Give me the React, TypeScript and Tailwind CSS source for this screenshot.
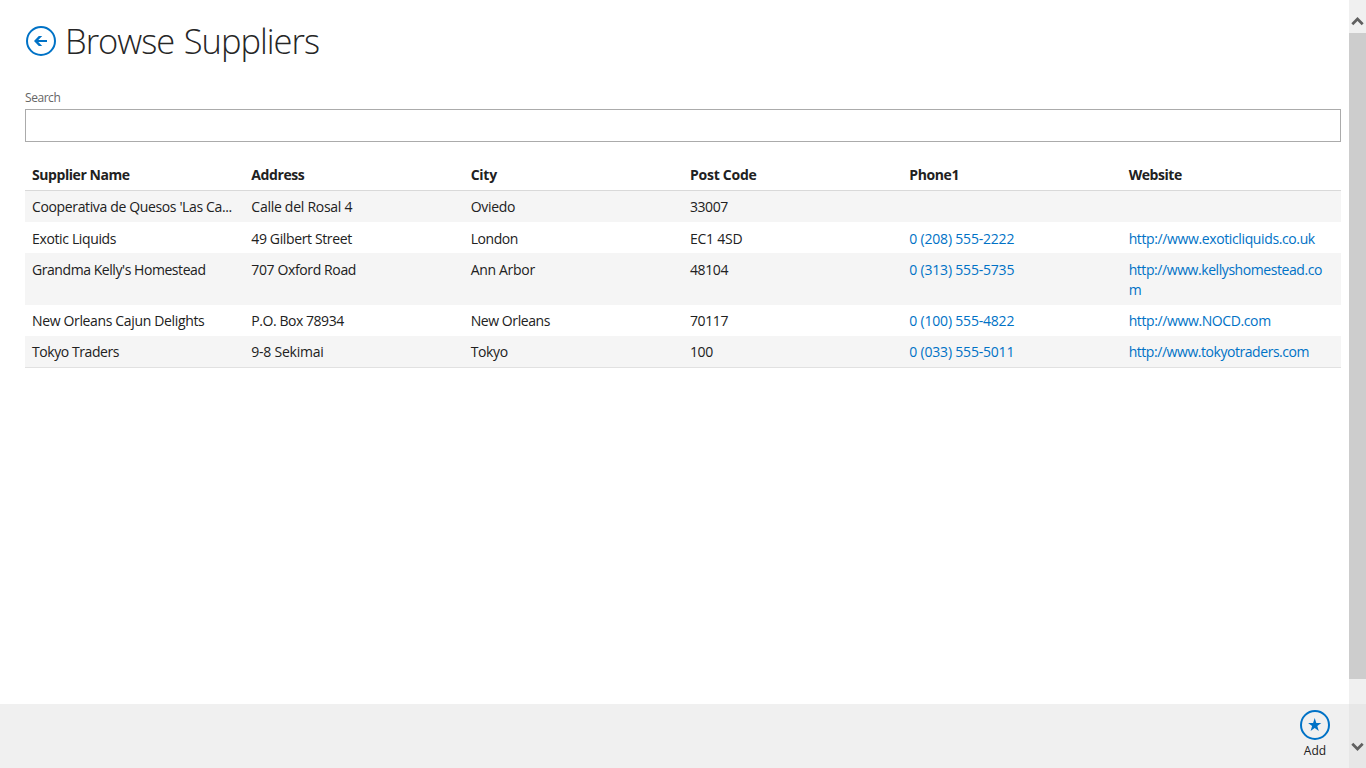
type Cell = { text: string; tracking: string };
type Row = { cells: Cell[]; height: string };

const c = (text: string, tracking: string): Cell => ({ text, tracking });

const headers: Cell[] = [
  c("Supplier Name", "tracking-[-0.43px]"),
  c("Address", "tracking-[-0.42px]"),
  c("City", "tracking-[-0.25px]"),
  c("Post Code", "tracking-[-0.25px]"),
  c("Phone1", "tracking-[-0.4px]"),
  c("Website", "tracking-[-0.45px]"),
];

const rows: Row[] = [
  {
    height: "h-[31px] pt-[6px]",
    cells: [
      c("Cooperativa de Quesos 'Las Ca...", "tracking-[-0.36px]"),
      c("Calle del Rosal 4", "tracking-[-0.27px]"),
      c("Oviedo", "tracking-[-0.28px]"),
      c("33007", "tracking-[-0.45px]"),
      c("", ""),
      c("", ""),
    ],
  },
  {
    height: "h-[31px] pt-[7px]",
    cells: [
      c("Exotic Liquids", "tracking-[-0.36px]"),
      c("49 Gilbert Street", "tracking-[-0.37px]"),
      c("London", "tracking-[-0.43px]"),
      c("EC1 4SD", "tracking-[-0.23px]"),
      c("0 (208) 555-2222", "tracking-[-0.2px]"),
      c("http://www.exoticliquids.co.uk", "tracking-[-0.38px]"),
    ],
  },
  {
    height: "h-[52px] pt-[7px]",
    cells: [
      c("Grandma Kelly's Homestead", "tracking-[-0.44px]"),
      c("707 Oxford Road", "tracking-[-0.38px]"),
      c("Ann Arbor", "tracking-[-0.31px]"),
      c("48104", "tracking-[-0.4px]"),
      c("0 (313) 555-5735", "tracking-[-0.2px]"),
      c("http://www.kellyshomestead.com", "tracking-[-0.43px]"),
    ],
  },
  {
    height: "h-[31px] pt-[6px]",
    cells: [
      c("New Orleans Cajun Delights", "tracking-[-0.35px]"),
      c("P.O. Box 78934", "tracking-[-0.45px]"),
      c("New Orleans", "tracking-[-0.42px]"),
      c("70117", "tracking-[-0.4px]"),
      c("0 (100) 555-4822", "tracking-[-0.2px]"),
      c("http://www.NOCD.com", "tracking-[-0.39px]"),
    ],
  },
  {
    height: "h-[31px] pt-[6px]",
    cells: [
      c("Tokyo Traders", "tracking-[-0.43px]"),
      c("9-8 Sekimai", "tracking-[-0.24px]"),
      c("Tokyo", "tracking-[-0.35px]"),
      c("100", "tracking-[-0.4px]"),
      c("0 (033) 555-5011", "tracking-[-0.2px]"),
      c("http://www.tokyotraders.com", "tracking-[-0.45px]"),
    ],
  },
];

function BackButton() {
  return (
    <button className="mt-[25px] size-8" aria-label="Back">
      <svg viewBox="0 0 32 32" className="size-8" fill="none">
        <circle cx="16" cy="16" r="14" stroke="#0072c6" strokeWidth="2" />
        <path
          d="M9 16L13.8 11H17.2L13.3 15H22V17H13.3L17.2 21H13.8Z"
          fill="#0072c6"
        />
      </svg>
    </button>
  );
}

function AddButton() {
  return (
    <button className="flex w-8 flex-col items-center">
      <svg viewBox="0 0 32 32" className="size-8" fill="none">
        <circle cx="16" cy="16" r="14" stroke="#0072c6" strokeWidth="2" />
        <path
          d="M15.7 9L17.3 13.9H22.3L18.3 17L19.8 22L15.7 19L11.6 22L13.1 17L9.1 13.9H14.1Z"
          fill="#0072c6"
        />
      </svg>
      <span className="text-xs leading-5 text-[#212121]">Add</span>
    </button>
  );
}

function Chevron({ d }: { d: string }) {
  return (
    <svg viewBox="0 0 17 17" className="h-[17px] w-[17px]" fill="none">
      <path d={d} stroke="#606060" strokeWidth="2.7" />
    </svg>
  );
}

function Scrollbar() {
  return (
    <div className="flex w-[17px] flex-none flex-col bg-[#f0f0f0]">
      <div className="h-[33px] pt-[13px]">
        <Chevron d="M3.3 11.2L8.5 6L13.7 11.2" />
      </div>
      <div className="h-[646px] bg-[#cdcdcd]" />
      <div className="h-[25px]" />
      <div className="flex-1 bg-[#e7e7e7] pt-[34px]">
        <Chevron d="M3.3 5.8L8.5 11L13.7 5.8" />
      </div>
    </div>
  );
}

export default function App() {
  return (
    <div className="flex h-[768px] w-[1366px] overflow-hidden bg-white font-['Open_Sans','Noto_Sans',sans-serif] text-[#212121]">
      <div className="flex min-w-0 flex-1 flex-col">
        <main className="flex-1 pr-2 pl-[25px]">
          <header className="flex h-[88px]">
            <BackButton />
            <h1 className="mt-[17px] ml-[8px] text-[34.5px] leading-[48px] font-light tracking-[-1px] [word-spacing:1.5px] whitespace-nowrap text-[#262626]">
              Browse Suppliers
            </h1>
          </header>
          <label className="block h-[21px] text-xs leading-5 tracking-[-0.45px] text-[#666666]" htmlFor="search">
            Search
          </label>
          <input
            id="search"
            className="block h-[33px] w-full border border-[#ababab] bg-white px-2 text-sm outline-none"
          />
          <div className="mt-[17px] border-b border-[#e1e1e1] text-sm leading-5">
            <div className="grid h-8 grid-cols-6 border-b border-[#d9d9d9] pt-[6px] font-bold">
              {headers.map((h) => (
                <div key={h.text} className="pl-[7px]">
                  <span className={h.tracking}>{h.text}</span>
                </div>
              ))}
            </div>
            {rows.map((row) => (
              <div key={row.cells[0].text} className={`grid grid-cols-6 odd:bg-white even:bg-[#f5f5f5] ${row.height}`}>
                {row.cells.map((cell, i) => (
                  <div
                    key={i}
                    className={`min-w-0 pl-[7px] ${
                      i === 5 ? "pr-[18px] break-all" : "pr-3 whitespace-nowrap"
                    } ${i > 3 ? "text-[#0072c6]" : ""} ${cell.tracking}`}
                  >
                    {cell.text}
                  </div>
                ))}
              </div>
            ))}
          </div>
        </main>
        <footer className="flex h-16 justify-end bg-[#f0f0f0] pt-[5px] pr-[18px]">
          <AddButton />
        </footer>
      </div>
      <Scrollbar />
    </div>
  );
}
